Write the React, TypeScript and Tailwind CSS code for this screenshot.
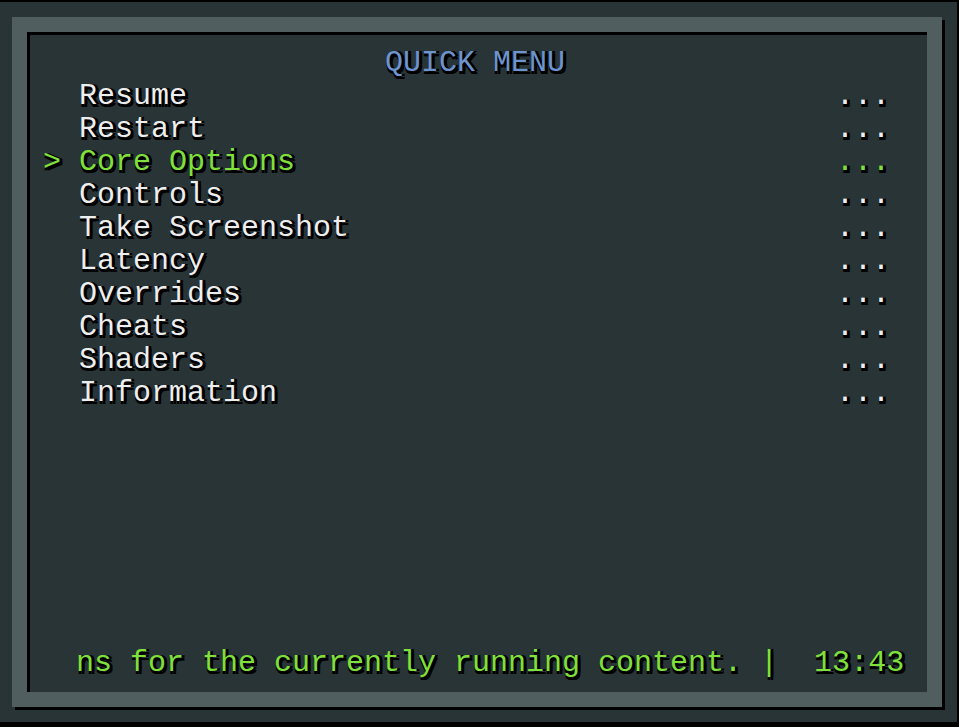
import React from "react";

const items = [
  "Resume",
  "Restart",
  "Core Options",
  "Controls",
  "Take Screenshot",
  "Latency",
  "Overrides",
  "Cheats",
  "Shaders",
  "Information",
];

const selected = 2;

export default function App() {
  return (
    <div
      className="w-[959px] h-[727px] bg-black pt-[2px] pr-[2px] pb-[5px] flex"
      style={{ fontFamily: '"Liberation Mono", "DejaVu Sans Mono", monospace' }}
    >
      <div className="flex-1 bg-[#283436] pl-[12px] pt-[15px]">
        <div className="w-[930px] h-[690px] border-[15px] border-[#505e5f] shadow-[3px_3px_0_#000]">
          <div className="w-full h-full flex flex-col pt-[15px] pb-[12px] shadow-[inset_3px_3px_0_#000] text-[30px] leading-[33px] whitespace-pre [text-shadow:3px_3px_0_#000,3px_0_0_#000,0_3px_0_#000]">
            <div className="h-[33px] text-center pr-[4px] text-[#6d94cf]">QUICK MENU</div>
            {items.map((label, i) => {
              const sel = i === selected;
              const color = sel ? "text-[#80e03c]" : "text-[#eeeeee]";
              return (
                <div key={label} className={`h-[33px] flex pl-[16px] pr-[37px] ${color}`}>
                  <span className="w-[36px]">{sel ? ">" : ""}</span>
                  <span className="flex-1">{label}</span>
                  <span>...</span>
                </div>
              );
            })}
            <div className="flex-1" />
            <div className="h-[33px] pl-[49px] text-[#80e03c]">
              ns for the currently running content. |  13:43
            </div>
          </div>
        </div>
      </div>
    </div>
  );
}
